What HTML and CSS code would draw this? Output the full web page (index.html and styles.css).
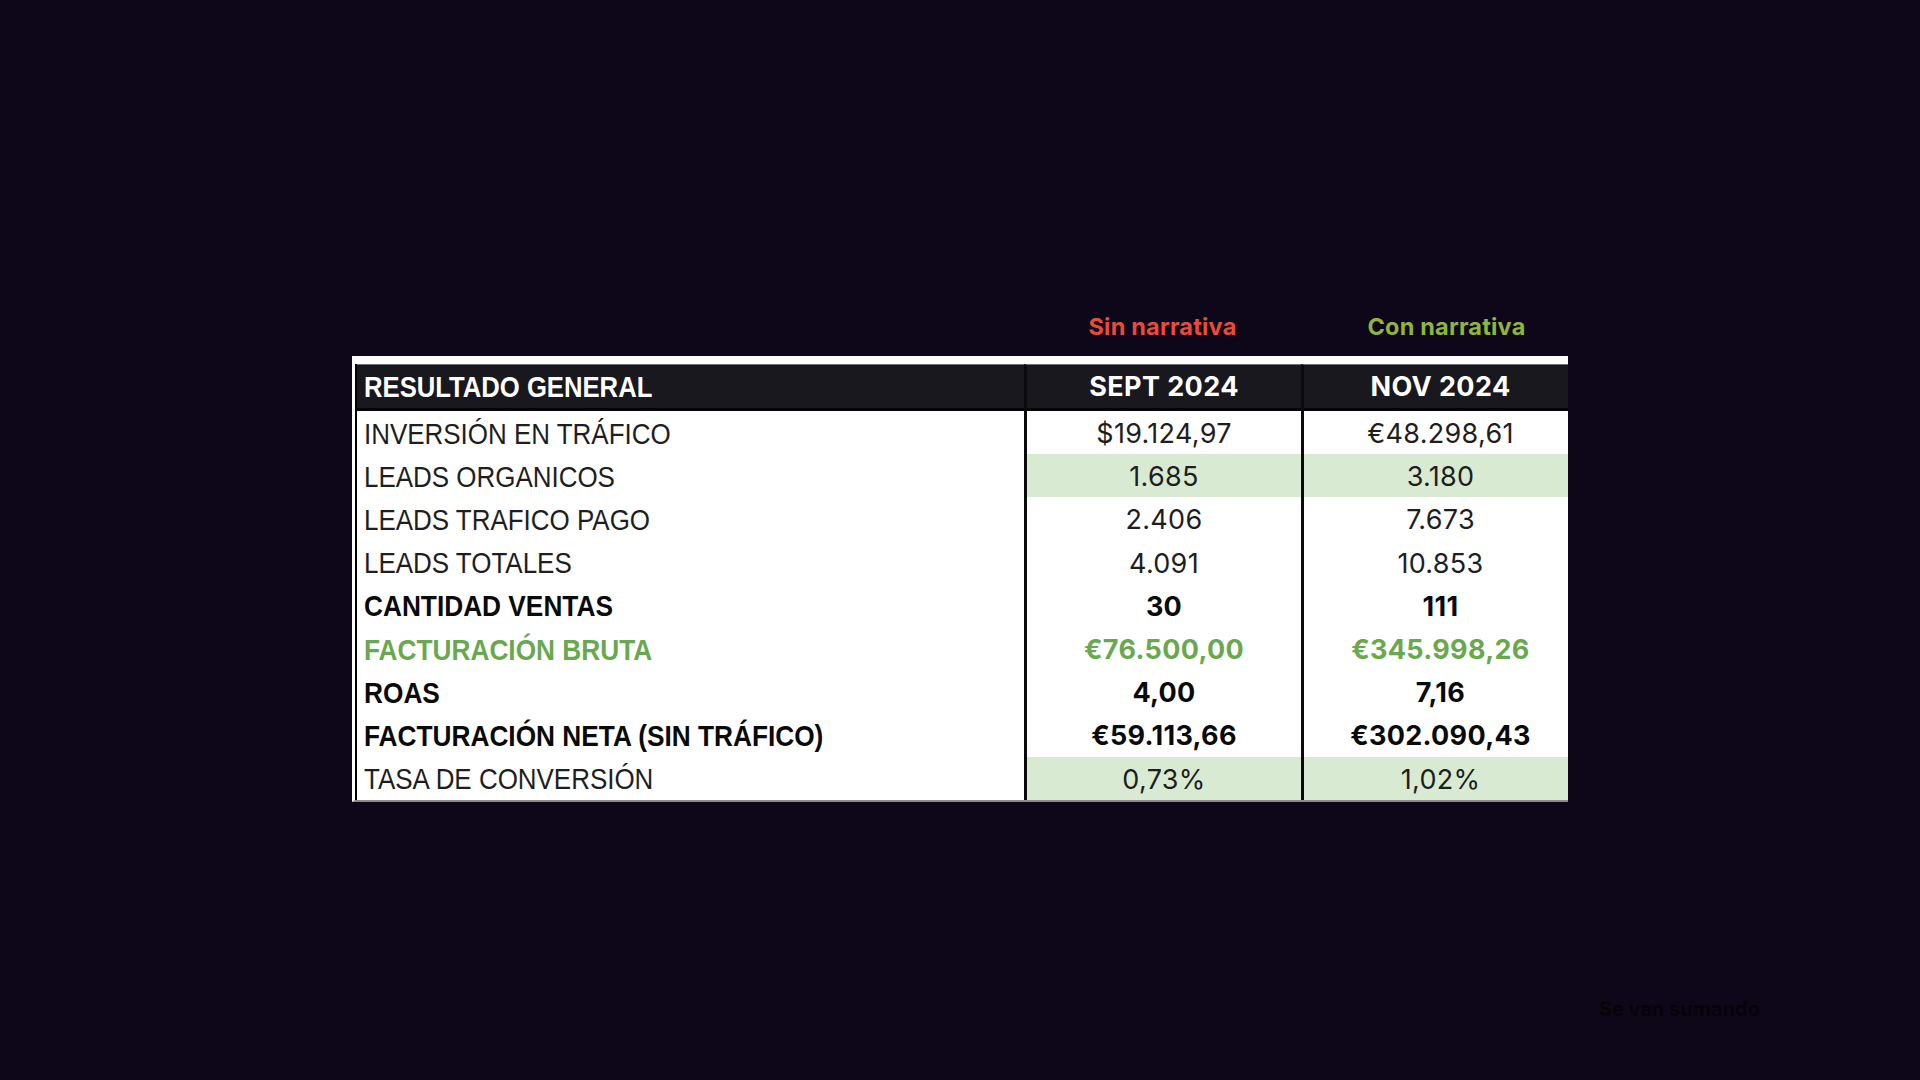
FILE: index.html
```html
<!DOCTYPE html>
<html lang="es">
<head>
<meta charset="utf-8">
<title>Resultado general</title>
<link rel="stylesheet" href="styles.css">
</head>
<body>
<main class="slide">
  <div class="labels">
    <div class="label-spacer"></div>
    <div class="label label-red">Sin narrativa</div>
    <div class="label label-green label-shift">Con narrativa</div>
  </div>
  <div class="sheet">
    <div class="grid">
      <div class="cell head first"><span class="cond">RESULTADO GENERAL</span></div>
      <div class="cell head num">SEPT 2024</div>
      <div class="cell head num last">NOV 2024</div>

      <div class="cell first"><span class="cond">INVERSIÓN EN TRÁFICO</span></div>
      <div class="cell num">$19.124,97</div>
      <div class="cell num last">€48.298,61</div>

      <div class="cell first"><span class="cond">LEADS ORGANICOS</span></div>
      <div class="cell num tint">1.685</div>
      <div class="cell num last tint">3.180</div>

      <div class="cell first"><span class="cond">LEADS TRAFICO PAGO</span></div>
      <div class="cell num">2.406</div>
      <div class="cell num last">7.673</div>

      <div class="cell first"><span class="cond">LEADS TOTALES</span></div>
      <div class="cell num">4.091</div>
      <div class="cell num last">10.853</div>

      <div class="cell first bold"><span class="cond">CANTIDAD VENTAS</span></div>
      <div class="cell num bold">30</div>
      <div class="cell num last bold">111</div>

      <div class="cell first bold greentext"><span class="cond">FACTURACIÓN BRUTA</span></div>
      <div class="cell num bold greentext">€76.500,00</div>
      <div class="cell num last bold greentext">€345.998,26</div>

      <div class="cell first bold"><span class="cond">ROAS</span></div>
      <div class="cell num bold">4,00</div>
      <div class="cell num last bold">7,16</div>

      <div class="cell first bold"><span class="cond">FACTURACIÓN NETA (SIN TRÁFICO)</span></div>
      <div class="cell num bold">€59.113,66</div>
      <div class="cell num last bold">€302.090,43</div>

      <div class="cell first"><span class="cond">TASA DE CONVERSIÓN</span></div>
      <div class="cell num tint">0,73%</div>
      <div class="cell num last tint">1,02%</div>
    </div>
  </div>
  <div class="footer">
    <span class="note">Se van sumando</span>
  </div>
</main>
</body>
</html>
```

FILE: styles.css
```css
html, body {
  margin: 0;
  padding: 0;
}

body {
  background: #0e0719;
  width: 1920px;
  height: 1080px;
  overflow: hidden;
}

.slide {
  padding-top: 307px;
  padding-left: 352px;
  width: 1216px;
}

.labels {
  display: grid;
  grid-template-columns: 672px 277px 267px;
  height: 40px;
  margin-bottom: 9px;
  align-items: center;
}

.label {
  text-align: center;
  font-family: Inter, "Noto Sans", sans-serif;
  font-weight: 700;
  font-size: 23.5px;
  line-height: 40px;
  letter-spacing: 0.2px;
}

.label-red {
  color: #ea4a3c;
}

.label-green {
  color: #8fb63c;
}

.label-shift {
  padding-left: 24px;
}

.sheet {
  border-top: 8px solid #ffffff;
  border-left: 3px solid #ffffff;
  border-bottom: 2px solid #8a8a8a;
  background: #ffffff;
}

.grid {
  display: grid;
  grid-template-columns: 667px 277px 267px;
  grid-auto-rows: 43.2px;
  grid-template-rows: 47px;
  border-left: 2px solid #000000;
}

.cell {
  display: flex;
  align-items: center;
  background: #ffffff;
  color: #1e1e1e;
  overflow: hidden;
  white-space: nowrap;
}

.cell.num {
  justify-content: center;
  border-left: 3px solid #0a0a0a;
  font-family: Inter, "Noto Sans", sans-serif;
  font-size: 27px;
  font-weight: 400;
  letter-spacing: 0.3px;
  padding-top: 2px;
}

.cell.num.last {
  padding-left: 9px;
}

.cell.first {
  padding-left: 7px;
  padding-top: 2px;
  font-family: "Liberation Sans", Arial, sans-serif;
  font-size: 30px;
}

.cond {
  display: inline-block;
  transform: scaleX(0.865);
  transform-origin: left center;
}

.cell.head {
  background: #18181e;
  color: #ffffff;
  font-weight: 700;
  padding-top: 0;
  border-top: 1px solid #6e6e74;
  border-bottom: 3px solid #050505;
}

.cell.head.num {
  font-size: 27px;
  font-weight: 700;
  letter-spacing: 0.4px;
}

.cell.head.first .cond {
  transform: scaleX(0.855);
}

.cell.bold {
  font-weight: 700;
  color: #0a0a0a;
}

.cell.first.bold .cond {
  transform: scaleX(0.875);
}

.cell.greentext {
  color: #6aa84f;
}

.cell.tint {
  background: #d9ead3;
}

.footer {
  display: flex;
  justify-content: flex-end;
  margin-top: 195px;
  margin-right: -192px;
}

.note {
  font-family: Inter, "Noto Sans", sans-serif;
  font-weight: 700;
  font-size: 20px;
  line-height: 24px;
  color: #050308;
}
```
